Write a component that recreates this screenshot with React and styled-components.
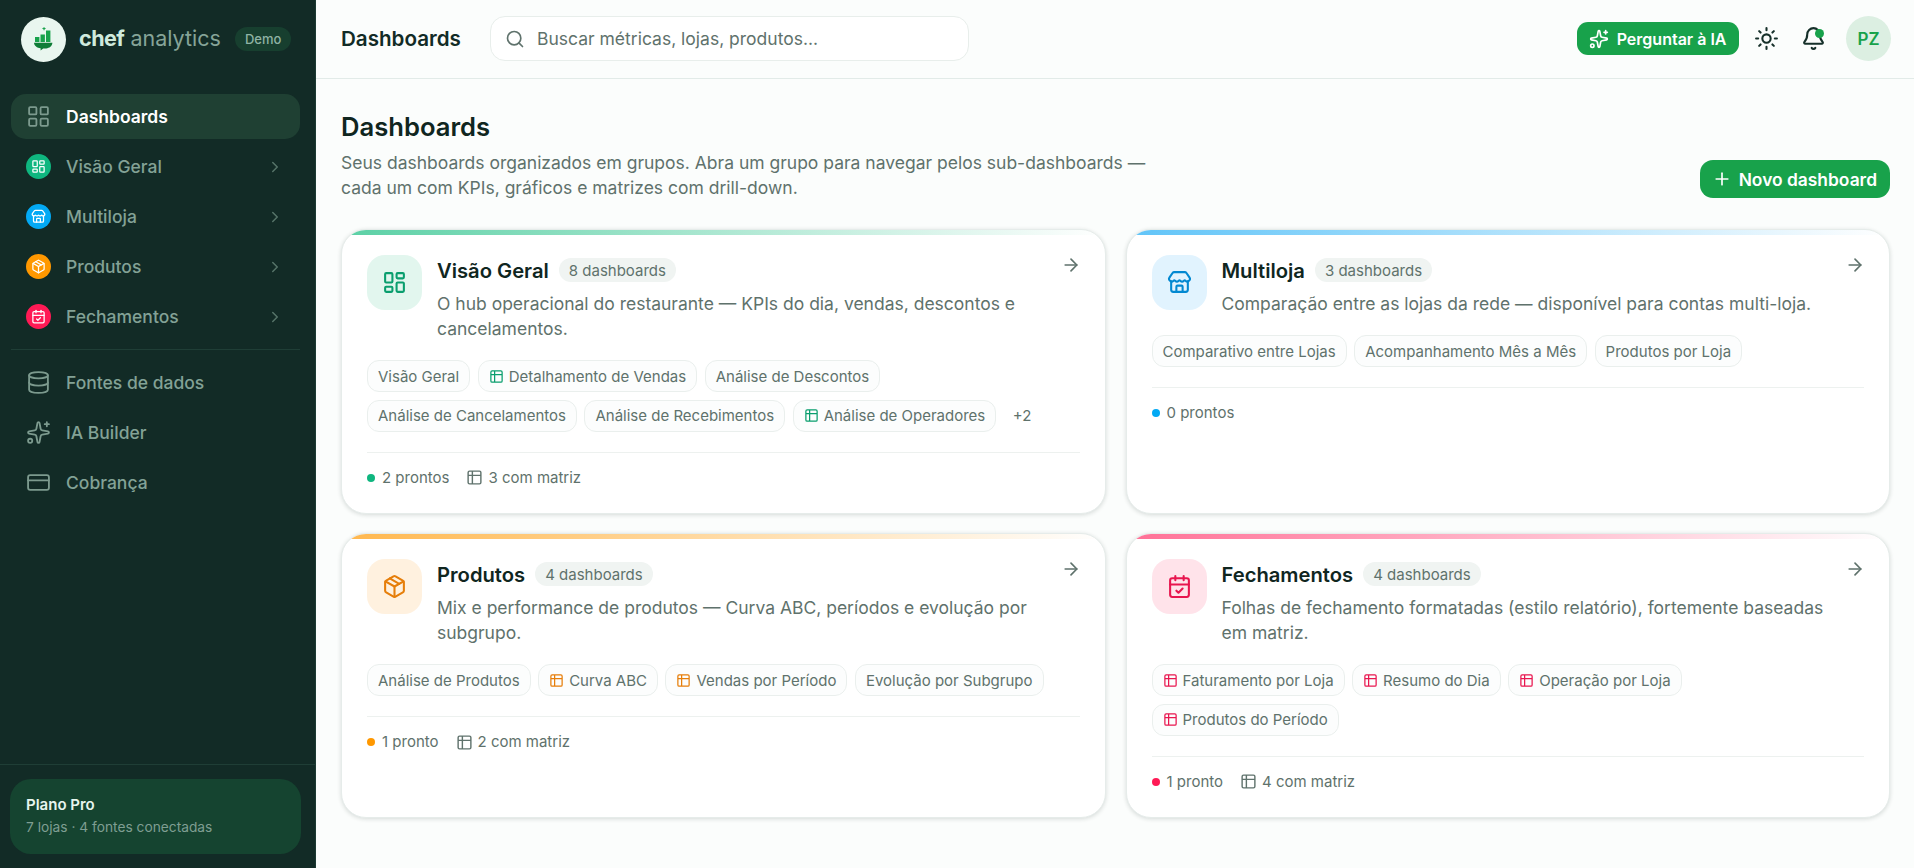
import React from "react";
import styled, { createGlobalStyle } from "styled-components";
import {
  ArrowRight,
  Bell,
  CalendarCheck,
  ChevronRight,
  CreditCard,
  Database,
  LayoutDashboard,
  LayoutGrid,
  Package,
  Plus,
  Search,
  Sparkles,
  Store,
  Sun,
  Table2,
} from "lucide-react";

const GlobalStyle = createGlobalStyle`
  html, body, #root { height: 100%; }
  body {
    margin: 0;
    font-family: Inter, "Liberation Sans", sans-serif;
    background: #fbfdfc;
    color: #10261f;
    overflow: hidden;
  }
  * { box-sizing: border-box; }
`;

const Shell = styled.div`
  display: flex;
  height: 868px;
`;

// === Sidebar ===
const Sidebar = styled.aside`
  width: 316px;
  flex: none;
  display: flex;
  flex-direction: column;
  background: #122b26;
  border-right: 1px solid #1c3a33;
`;

const Brand = styled.div`
  display: flex;
  align-items: center;
  height: 79px;
  padding: 0 0 0 21px;
`;

const LogoBadge = styled.div`
  width: 45px;
  height: 45px;
  flex: none;
  display: flex;
  align-items: center;
  justify-content: center;
  border-radius: 50%;
  background: #e9f6ef;
`;

const Wordmark = styled.div`
  margin: -3px 0 0 13px;
  font-size: 21.5px;
  white-space: nowrap;
  color: #86a498;
  font-weight: 400;

  b {
    font-weight: 700;
    letter-spacing: -0.5px;
    color: #cfeadd;
  }
`;

const DemoPill = styled.span`
  margin: -1px 0 0 14px;
  padding: 0 10px;
  height: 24px;
  display: inline-flex;
  align-items: center;
  border-radius: 12px;
  background: #173f2f;
  color: #8fb3a4;
  font-size: 13px;
  font-weight: 500;
`;

const Nav = styled.nav`
  display: flex;
  flex-direction: column;
  gap: 5px;
  padding: ${({ $top }) => $top}px 15px 0 11px;
`;

const NavItem = styled.div`
  height: 45px;
  display: flex;
  align-items: center;
  gap: 15px;
  padding: 0 16px 0 15px;
  border-radius: 15px;
  font-size: 17.5px;
  font-weight: ${({ $active }) => ($active ? 600 : 500)};
  color: ${({ $active }) => ($active ? "#ffffff" : "#83a296")};
  background: ${({ $active }) => ($active ? "#1f4033" : "transparent")};

  > svg:first-child {
    color: #7c9a8e;
  }
`;

const NavTile = styled.span`
  width: 25px;
  height: 25px;
  flex: none;
  display: flex;
  align-items: center;
  justify-content: center;
  border-radius: 50%;
  color: #fff;
  background: ${({ $color }) => $color};
`;

const NavLabel = styled.span`
  flex: 1;
`;

const NavChevron = styled(ChevronRight)`
  color: #567469;
`;

const NavDivider = styled.hr`
  height: 1px;
  margin: 10px 15px 10px 11px;
  border: 0;
  background: #1f3e36;
`;

const SidebarFooter = styled.div`
  margin-top: auto;
  padding: 14px 14px 14px 10px;
  border-top: 1px solid #1f3e36;
`;

const PlanCard = styled.div`
  height: 75px;
  padding: 15px 16px;
  border-radius: 21px;
  background: #154430;
`;

const PlanName = styled.div`
  font-size: 15px;
  line-height: 22px;
  font-weight: 600;
  color: #e7f5ee;
`;

const PlanInfo = styled.div`
  font-size: 13.75px;
  line-height: 22px;
  color: #7f9e92;
`;

// === Top bar ===
const Main = styled.main`
  flex: 1;
  min-width: 0;
  display: flex;
  flex-direction: column;
`;

const TopBar = styled.header`
  height: 79px;
  flex: none;
  display: flex;
  align-items: center;
  padding: 0 23px 1px 25px;
  border-bottom: 1px solid #e2ebe8;
`;

const TopTitle = styled.div`
  width: 149px;
  font-size: 20.6px;
  font-weight: 600;
  color: #122b26;
`;

const SearchBox = styled.div`
  width: 479px;
  height: 45px;
  display: flex;
  align-items: center;
  gap: 12px;
  padding: 0 14px;
  background: #fff;
  border: 1px solid #e8eeeb;
  border-radius: 15px;
  font-size: 17.5px;
  color: #5f726c;

  svg {
    color: #5f726c;
  }
`;

const TopActions = styled.div`
  margin-left: auto;
  display: flex;
  align-items: center;
`;

const AskButton = styled.button`
  height: 33px;
  display: flex;
  align-items: center;
  gap: 8px;
  padding: 0 12px;
  border: 0;
  border-radius: 11px;
  background: #18a24b;
  color: #fff;
  font: 600 16px Inter, sans-serif;
`;

const IconButton = styled.span`
  position: relative;
  width: 25px;
  height: 25px;
  margin-left: ${({ $gap }) => $gap}px;
  display: flex;
  color: #16302a;
`;

const BellDot = styled.span`
  position: absolute;
  top: 3px;
  right: 2px;
  width: 9px;
  height: 9px;
  border-radius: 50%;
  background: #18a24b;
`;

const Avatar = styled.div`
  width: 45px;
  height: 45px;
  margin-left: 20.5px;
  display: flex;
  align-items: center;
  justify-content: center;
  border-radius: 50%;
  background: #dcefe2;
  color: #18a24b;
  font-size: 17px;
  font-weight: 600;
`;

// === Page ===
const Content = styled.div`
  padding: 31px 24px 0 25px;
`;

const PageHead = styled.div`
  display: flex;
  align-items: flex-end;
  justify-content: space-between;
  margin-bottom: 29px;
`;

const PageTitle = styled.h1`
  margin: 0 0 6px;
  font-size: 25.6px;
  line-height: 34px;
  font-weight: 600;
  color: #10261f;
`;

const PageSub = styled.p`
  margin: 0;
  width: 820px;
  font-size: 17.5px;
  line-height: 25px;
  color: #5f726c;
`;

const NewButton = styled.button`
  height: 38px;
  margin-bottom: 2px;
  display: flex;
  align-items: center;
  gap: 7px;
  padding: 0 13px 0 12px;
  border: 0;
  border-radius: 13px;
  background: #18a24b;
  color: #fff;
  font: 600 17.4px Inter, sans-serif;
`;

const CardGrid = styled.div`
  display: grid;
  grid-template-columns: 1fr 1fr;
  grid-auto-rows: 1fr;
  gap: 19.5px 20px;
`;

const Card = styled.article`
  display: flex;
  flex-direction: column;
  overflow: hidden;
  background: #fff;
  border: 1px solid #e6ecea;
  border-radius: 25px;
  box-shadow: 0 1px 4px rgba(16, 38, 31, 0.16);
`;

const CardBar = styled.div`
  height: 5px;
  flex: none;
  background: linear-gradient(90deg, ${({ $color }) => $color}, transparent);
`;

const CardBody = styled.div`
  padding: 20px 25px 23px;
`;

const CardHead = styled.div`
  display: flex;
  gap: 15px;
`;

const CardIcon = styled.div`
  width: 55px;
  height: 55px;
  flex: none;
  display: flex;
  align-items: center;
  justify-content: center;
  border-radius: 18px;
  background: ${({ $bg }) => $bg};
  color: ${({ $color }) => $color};
`;

const CardHeadText = styled.div`
  flex: 1;
  min-width: 0;
`;

const TitleRow = styled.div`
  height: 30px;
  display: flex;
  align-items: center;
  gap: 10px;
`;

const CardTitle = styled.h2`
  margin: 0;
  font-size: 20.2px;
  font-weight: 600;
  color: #10261f;
`;

const CountBadge = styled.span`
  height: 24px;
  display: inline-flex;
  align-items: center;
  padding: 0 10px;
  border-radius: 12px;
  background: #f0f4f2;
  color: #5f726c;
  font-size: 15px;
`;

const CardArrow = styled(ArrowRight)`
  margin-left: auto;
  margin-top: -10px;
  margin-right: -1px;
  color: #5f726c;
`;

const CardDesc = styled.p`
  margin: 6px 0 0;
  padding-right: 20px;
  font-size: 17.5px;
  line-height: 25px;
  color: #5f726c;
`;

const ChipRow = styled.div`
  display: flex;
  flex-wrap: wrap;
  align-items: center;
  gap: 7.5px;
  margin-top: 19px;
`;

const Chip = styled.span`
  height: 32px;
  display: inline-flex;
  align-items: center;
  gap: 5px;
  padding: 0 10px;
  background: #fcfdfd;
  border: 1px solid #eaefed;
  border-radius: 12px;
  font-size: 15px;
  color: #5f726c;

  svg {
    color: ${({ $color }) => $color};
  }
`;

const ChipMore = styled.span`
  padding: 0 9px;
  font-size: 15px;
  color: #5f726c;
`;

const CardFooter = styled.div`
  display: flex;
  align-items: center;
  gap: 17px;
  margin-top: 20px;
  padding-top: 13px;
  border-top: 1px solid #edf1ef;
  font-size: 15px;
  line-height: 24px;
  color: #5f726c;
`;

const FooterStat = styled.span`
  display: inline-flex;
  align-items: center;
  gap: ${({ $gap }) => $gap}px;
`;

const Dot = styled.i`
  width: 8px;
  height: 8px;
  border-radius: 50%;
  background: ${({ $color }) => $color};
`;

const groups = [
  {
    title: "Visão Geral",
    count: "8 dashboards",
    desc: "O hub operacional do restaurante — KPIs do dia, vendas, descontos e cancelamentos.",
    Icon: LayoutDashboard,
    color: "#0a9e6e",
    dot: "#0fb67f",
    bar: "#5bd0a5",
    bg: "#e2f6ee",
    chips: [
      ["Visão Geral"],
      ["Detalhamento de Vendas", true],
      ["Análise de Descontos"],
      ["Análise de Cancelamentos"],
      ["Análise de Recebimentos"],
      ["Análise de Operadores", true],
    ],
    more: "+2",
    ready: "2 prontos",
    matrix: "3 com matriz",
  },
  {
    title: "Multiloja",
    count: "3 dashboards",
    desc: "Comparação entre as lojas da rede — disponível para contas multi-loja.",
    Icon: Store,
    color: "#0288d1",
    dot: "#03a9f4",
    bar: "#60c4f8",
    bg: "#e1f3fe",
    chips: [["Comparativo entre Lojas"], ["Acompanhamento Mês a Mês"], ["Produtos por Loja"]],
    ready: "0 prontos",
  },
  {
    title: "Produtos",
    count: "4 dashboards",
    desc: "Mix e performance de produtos — Curva ABC, períodos e evolução por subgrupo.",
    Icon: Package,
    color: "#e67e0a",
    dot: "#ff9800",
    bar: "#ffb74d",
    bg: "#fff1df",
    chips: [
      ["Análise de Produtos"],
      ["Curva ABC", true],
      ["Vendas por Período", true],
      ["Evolução por Subgrupo"],
    ],
    ready: "1 pronto",
    matrix: "2 com matriz",
  },
  {
    title: "Fechamentos",
    count: "4 dashboards",
    desc: "Folhas de fechamento formatadas (estilo relatório), fortemente baseadas em matriz.",
    Icon: CalendarCheck,
    color: "#e8164f",
    dot: "#ff1a55",
    bar: "#ff7096",
    bg: "#ffe3ea",
    chips: [
      ["Faturamento por Loja", true],
      ["Resumo do Dia", true],
      ["Operação por Loja", true],
      ["Produtos do Período", true],
    ],
    ready: "1 pronto",
    matrix: "4 com matriz",
  },
];

const navGroups = [
  { label: "Visão Geral", Icon: LayoutDashboard, color: "#0fb67f" },
  { label: "Multiloja", Icon: Store, color: "#03a9f4" },
  { label: "Produtos", Icon: Package, color: "#ff9800" },
  { label: "Fechamentos", Icon: CalendarCheck, color: "#ff1a55" },
];

const navTools = [
  { label: "Fontes de dados", Icon: Database },
  { label: "IA Builder", Icon: Sparkles },
  { label: "Cobrança", Icon: CreditCard },
];

function ChefLogo() {
  return (
    <svg width="25" height="25" viewBox="0 0 25 25" fill="#18a24b">
      <rect x="4" y="10" width="4.4" height="5" />
      <rect x="9.500" y="7.500" width="4.4" height="7.500" />
      <rect x="15" y="3.500" width="4.4" height="11.500" />
      <path d="M12 0l.7 1.400 1.400.6-1.400.7-.7 1.400-.6-1.400-1.500-.7 1.500-.6z" transform="translate(1 -0.4)" />
      <path
        fill="#0f7d37"
        d="M3 15.800h18.400c-.3 3.400-2.900 5.400-6.200 5.600h-3l-2.600 2.200v-2.300C6 21 3.300 19 3 15.800z"
      />
    </svg>
  );
}

function GroupCard({ group }) {
  const { Icon } = group;
  return (
    <Card>
      <CardBar $color={group.bar} />
      <CardBody>
        <CardHead>
          <CardIcon $bg={group.bg} $color={group.color}>
            <Icon size={25} strokeWidth={2} />
          </CardIcon>
          <CardHeadText>
            <TitleRow>
              <CardTitle>{group.title}</CardTitle>
              <CountBadge>{group.count}</CountBadge>
              <CardArrow size={20} />
            </TitleRow>
            <CardDesc>{group.desc}</CardDesc>
          </CardHeadText>
        </CardHead>
        <ChipRow>
          {group.chips.map(([label, hasMatrix]) => (
            <Chip key={label} $color={group.color}>
              {hasMatrix && <Table2 size={15} />}
              {label}
            </Chip>
          ))}
          {group.more && <ChipMore>{group.more}</ChipMore>}
        </ChipRow>
        <CardFooter>
          <FooterStat $gap={7}>
            <Dot $color={group.dot} />
            {group.ready}
          </FooterStat>
          {group.matrix && (
            <FooterStat $gap={5}>
              <Table2 size={17} />
              {group.matrix}
            </FooterStat>
          )}
        </CardFooter>
      </CardBody>
    </Card>
  );
}

export default function App() {
  return (
    <>
      <GlobalStyle />
      <Shell>
        <Sidebar>
          <Brand>
            <LogoBadge>
              <ChefLogo />
            </LogoBadge>
            <Wordmark>
              <b>chef</b> analytics
            </Wordmark>
            <DemoPill>Demo</DemoPill>
          </Brand>
          <Nav $top={15}>
            <NavItem $active>
              <LayoutGrid size={25} strokeWidth={1.75} />
              <NavLabel>Dashboards</NavLabel>
            </NavItem>
            {navGroups.map(({ label, Icon, color }) => (
              <NavItem key={label}>
                <NavTile $color={color}>
                  <Icon size={15} strokeWidth={2} />
                </NavTile>
                <NavLabel>{label}</NavLabel>
                <NavChevron size={18} />
              </NavItem>
            ))}
          </Nav>
          <NavDivider />
          <Nav as="div" $top={0}>
            {navTools.map(({ label, Icon }) => (
              <NavItem key={label}>
                <Icon size={25} strokeWidth={1.75} />
                <NavLabel>{label}</NavLabel>
              </NavItem>
            ))}
          </Nav>
          <SidebarFooter>
            <PlanCard>
              <PlanName>Plano Pro</PlanName>
              <PlanInfo>7 lojas · 4 fontes conectadas</PlanInfo>
            </PlanCard>
          </SidebarFooter>
        </Sidebar>
        <Main>
          <TopBar>
            <TopTitle>Dashboards</TopTitle>
            <SearchBox>
              <Search size={20} />
              Buscar métricas, lojas, produtos...
            </SearchBox>
            <TopActions>
              <AskButton>
                <Sparkles size={20} />
                Perguntar à IA
              </AskButton>
              <IconButton $gap={15}>
                <Sun size={25} />
              </IconButton>
              <IconButton $gap={22}>
                <Bell size={25} />
                <BellDot />
              </IconButton>
              <Avatar>PZ</Avatar>
            </TopActions>
          </TopBar>
          <Content>
            <PageHead>
              <div>
                <PageTitle>Dashboards</PageTitle>
                <PageSub>
                  Seus dashboards organizados em grupos. Abra um grupo para navegar pelos sub-dashboards — cada um com
                  KPIs, gráficos e matrizes com drill-down.
                </PageSub>
              </div>
              <NewButton>
                <Plus size={20} />
                Novo dashboard
              </NewButton>
            </PageHead>
            <CardGrid>
              {groups.map((group) => (
                <GroupCard key={group.title} group={group} />
              ))}
            </CardGrid>
          </Content>
        </Main>
      </Shell>
    </>
  );
}
